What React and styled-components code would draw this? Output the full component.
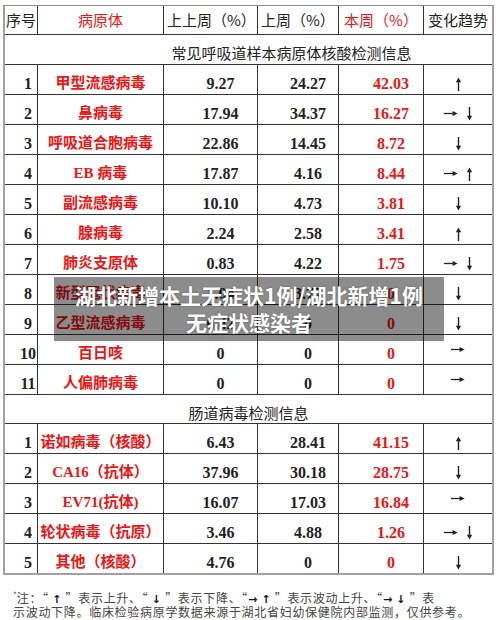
import React from "react";
import styled, { createGlobalStyle } from "styled-components";

const GlobalStyle = createGlobalStyle`
  html, body { margin: 0; padding: 0; background: #fff; }
  body { font-family: "Liberation Serif", "Noto Sans CJK SC", serif; color: #222; }
`;

const RED = "#f01414";
const LINE = "#333";

const Page = styled.div`
  position: relative;
  width: 500px;
  height: 620px;
  box-sizing: border-box;
  padding: 5px 0 0 3px;
  overflow: hidden;
`;

const Sheet = styled.div`
  width: 491px;
  box-sizing: border-box;
  display: grid;
  grid-template-columns: 32px 125px 93px 80px 84px 68px;
  grid-template-rows: 28px 29px repeat(11, 29px) 28px repeat(5, 29px);
  gap: 1px;
  background: ${LINE};
  border: 2px solid #a0a0a0;
  border-top: 1px solid #8c8c8c;
`;

const Cell = styled.div`
  background: #fff;
  display: flex;
  justify-content: center;
  align-items: flex-end;
  white-space: nowrap;
  overflow: visible;
`;

const HeadCell = styled(Cell)`
  align-items: center;
  font-family: "Noto Sans CJK SC", serif;
  font-size: 15px;
  line-height: 18px;
  color: ${(p) => (p.$red ? RED : "#222")};
  justify-content: ${(p) => (p.$left ? "flex-start" : "center")};
  padding-left: ${(p) => (p.$left ? 3 : 0)}px;
`;

const SectionCell = styled(Cell)`
  grid-column: 1 / -1;
  font-family: "Noto Sans CJK SC", serif;
  font-size: 15px;
  line-height: 18px;
  padding-bottom: ${(p) => p.$pb}px;
  padding-left: ${(p) => p.$shift}px;
  color: #222;
`;

const IndexCell = styled(Cell)`
  font-family: "Liberation Serif", serif;
  font-weight: bold;
  font-size: 16px;
  line-height: 18px;
  padding: 0 0 1px 14px;
`;

const NameCell = styled(Cell)`
  font-family: "Liberation Serif", "Noto Sans CJK SC", serif;
  font-weight: bold;
  font-size: 15px;
  line-height: 18px;
  color: ${RED};
  padding-bottom: 2px;
`;

const ValueCell = styled(Cell)`
  font-family: "Liberation Serif", serif;
  font-weight: bold;
  font-size: 16px;
  line-height: 18px;
  color: ${(p) => (p.$red ? RED : "#222")};
  padding: 0 0 1px 20px;
`;

const TrendCell = styled(Cell)`
  align-items: center;
  gap: 8px;
  padding-top: ${(p) => (p.$lone ? 0 : 8)}px;
  box-sizing: border-box;
`;

const Banner = styled.div`
  position: absolute;
  left: 54px;
  top: 277px;
  width: 390px;
  height: 64px;
  background: rgba(0, 0, 0, 0.45);
  display: flex;
  flex-direction: column;
  justify-content: center;
  align-items: center;
  color: #fff;
  font-family: "Noto Sans CJK SC", sans-serif;
  font-weight: bold;
  font-size: 21px;
  line-height: 27px;
  text-shadow: 0 0 2px rgba(0, 0, 0, 0.35);
`;

const Note = styled.div`
  margin-top: 16px;
  padding-left: 10px;
  font-family: "Noto Sans CJK SC", sans-serif;
  font-size: 12px;
  letter-spacing: 0.7px;
  color: #444;
  white-space: nowrap;
`;

const NoteLine = styled.div`
  height: 13.5px;
  line-height: 13px;
`;

const Mark = styled.span`
  font-size: 8px;
  line-height: 0;
  vertical-align: 5px;
  letter-spacing: 0;
`;

const NoteArrow = styled.span`
  font-family: "DejaVu Sans", sans-serif;
  font-weight: bold;
  font-size: 11px;
  line-height: 0;
  color: #111;
`;

const Up = () => (
  <svg width="7" height="14" viewBox="0 0 7 14">
    <path d="M3.5 4V14" stroke="#222" strokeWidth="1.4" />
    <path d="M0.9 5.3L3.5 0.4L6.1 5.3Z" fill="#222" />
  </svg>
);

const Down = () => (
  <svg width="7" height="14" viewBox="0 0 7 14">
    <path d="M3.5 0V10" stroke="#222" strokeWidth="1.4" />
    <path d="M0.9 8.7L3.5 13.6L6.1 8.7Z" fill="#222" />
  </svg>
);

const Right = () => (
  <svg width="14" height="7" viewBox="0 0 14 7">
    <path d="M0 3.5H10" stroke="#222" strokeWidth="1.3" />
    <path d="M8.6 1L13.6 3.5L8.6 6Z" fill="#222" />
  </svg>
);

const Trend = ({ t }) => {
  if (t === "r") {
    return (
      <TrendCell $lone>
        <Right />
      </TrendCell>
    );
  }
  return (
    <TrendCell>
      {t.length > 1 && <Right />}
      {t.endsWith("u") ? <Up /> : <Down />}
    </TrendCell>
  );
};

const respiratory = [
  ["1", "甲型流感病毒", "9.27", "24.27", "42.03", "u"],
  ["2", "鼻病毒", "17.94", "34.37", "16.27", "rd"],
  ["3", "呼吸道合胞病毒", "22.86", "14.45", "8.72", "d"],
  ["4", "EB 病毒", "17.87", "4.16", "8.44", "ru"],
  ["5", "副流感病毒", "10.10", "4.73", "3.81", "d"],
  ["6", "腺病毒", "2.24", "2.58", "3.41", "u"],
  ["7", "肺炎支原体", "0.83", "4.22", "1.75", "rd"],
  ["8", "新型冠状病毒", "1.04", "3.77", "0", "d"],
  ["9", "乙型流感病毒", "0.42", "0", "0", "d"],
  ["10", "百日咳", "0", "0", "0", "r"],
  ["11", "人偏肺病毒", "0", "0", "0", "r"],
];

const enteric = [
  ["1", "诺如病毒（核酸）", "6.43", "28.41", "41.15", "u"],
  ["2", "CA16（抗体）", "37.96", "30.18", "28.75", "d"],
  ["3", "EV71(抗体)", "16.07", "17.03", "16.84", "r"],
  ["4", "轮状病毒（抗原）", "3.46", "4.88", "1.26", "rd"],
  ["5", "其他（核酸）", "4.76", "0", "0", "d"],
];

const Rows = ({ data }) =>
  data.map(([no, name, a, b, c, t]) => (
    <React.Fragment key={no + name}>
      <IndexCell>{no}</IndexCell>
      <NameCell>{name}</NameCell>
      <ValueCell>{a}</ValueCell>
      <ValueCell>{b}</ValueCell>
      <ValueCell $red>{c}</ValueCell>
      <Trend t={t} />
    </React.Fragment>
  ));

export default function App() {
  return (
    <>
      <GlobalStyle />
      <Page>
        <Sheet>
          <HeadCell>序号</HeadCell>
          <HeadCell $red>病原体</HeadCell>
          <HeadCell $left>上上周（%）</HeadCell>
          <HeadCell $left>上周（%）</HeadCell>
          <HeadCell $red>本周（%）</HeadCell>
          <HeadCell>变化趋势</HeadCell>

          <SectionCell $pb={2} $shift={86}>常见呼吸道样本病原体核酸检测信息</SectionCell>
          <Rows data={respiratory} />

          <SectionCell $pb={1} $shift={0}>肠道病毒检测信息</SectionCell>
          <Rows data={enteric} />
        </Sheet>

        <Note>
          <NoteLine>
            <Mark>*</Mark>注：“ <NoteArrow>↑</NoteArrow> ”表示上升、“ <NoteArrow>↓</NoteArrow> ”表示下降、“<NoteArrow>→</NoteArrow> <NoteArrow>↑</NoteArrow> ”表示波动上升、“<NoteArrow>→</NoteArrow> <NoteArrow>↓</NoteArrow> ”表
          </NoteLine>
          <NoteLine>示波动下降。临床检验病原学数据来源于湖北省妇幼保健院内部监测，仅供参考。</NoteLine>
        </Note>

        <Banner>
          <div>湖北新增本土无症状1例/湖北新增1例</div>
          <div>无症状感染者</div>
        </Banner>
      </Page>
    </>
  );
}
